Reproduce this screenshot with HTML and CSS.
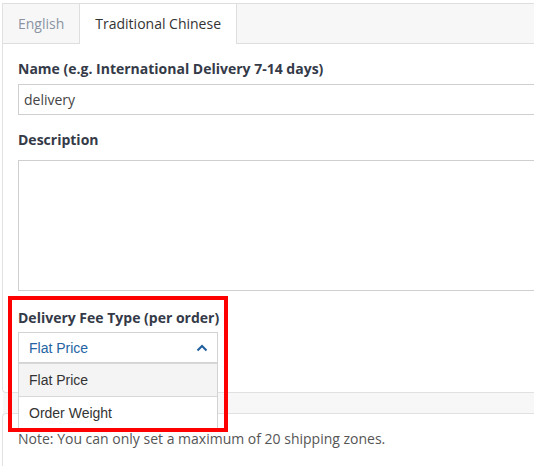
FILE: index.html
```html
<!DOCTYPE html>
<html lang="en">
<head>
    <meta charset="UTF-8">
    <meta name="viewport" content="width=device-width, initial-scale=1.0">
    <title>Shipping Zone</title>
    <link rel="stylesheet" href="styles.css">
</head>
<body>
    <div class="page">
        <div class="panel">
            <div class="tabs">
                <div class="tab">English</div>
                <div class="tab tab-active">Traditional Chinese</div>
            </div>
            <div class="panel-body">
                <div class="field">
                    <label class="field-label">Name (e.g. International Delivery 7-14 days)</label>
                    <input type="text" class="text-input" value="delivery">
                </div>
                <div class="field field-desc">
                    <label class="field-label">Description</label>
                    <textarea class="text-area"></textarea>
                </div>
                <div class="field field-fee">
                    <label class="field-label">Delivery Fee Type (per order)</label>
                    <div class="select">
                        <span class="select-value">Flat Price</span>
                        <svg class="chevron" width="12" height="8" viewBox="0 0 12 8">
                            <path d="M1.5 6.5 L6 2 L10.5 6.5" fill="none" stroke="#1f5f9e" stroke-width="2"/>
                        </svg>
                    </div>
                    <ul class="options">
                        <li class="option option-hover">Flat Price</li>
                        <li class="option">Order Weight</li>
                    </ul>
                    <div class="highlight"></div>
                </div>
            </div>
        </div>
        <div class="divider"></div>
        <div class="panel panel-note">
            <p class="note">Note: You can only set a maximum of 20 shipping zones.</p>
        </div>
    </div>
</body>
</html>
```

FILE: styles.css
```css
html, body {
    margin: 0;
    padding: 0;
    background-color: #ffffff;
    overflow: hidden;
}
body {
    font-family: "Open Sans", "Liberation Sans", sans-serif;
    font-size: 14px;
    color: #333;
}
.page {
    padding: 3px 0 0 2px;
}
.panel {
    border-left: 1px solid #e1e1e1;
    border-bottom: 1px solid #e1e1e1;
    border-radius: 0 0 0 4px;
    background-color: #ffffff;
}
.tabs {
    display: flex;
    height: 39px;
    background-color: #f7f7f7;
    border-top: 1px solid #dedede;
    border-bottom: 1px solid #dedede;
}
.tab {
    padding: 0 15px;
    line-height: 39px;
    color: #8a93a3;
    border-right: 1px solid #dedede;
}
.tab-active {
    padding: 0 15px;
    color: #333;
    background-color: #ffffff;
    height: 40px;
}
.panel-body {
    padding: 15px 0 29px 15px;
}
.field {
    margin-bottom: 15px;
}
.field-label {
    display: block;
    font-weight: bold;
    line-height: 20px;
    color: #343a48;
    margin-bottom: 5px;
}
.text-input {
    display: block;
    box-sizing: border-box;
    width: 100%;
    height: 31px;
    margin: 0;
    padding: 0 5px;
    border: 1px solid #cfcfcf;
    border-right: none;
    font-family: "Open Sans", sans-serif;
    font-size: 14px;
    color: #444;
    outline: none;
}
.field-desc {
    margin-bottom: 17px;
}
.field-desc .field-label {
    margin-bottom: 10px;
}
.text-area {
    display: block;
    box-sizing: border-box;
    width: 100%;
    height: 131px;
    margin: 0;
    border: 1px solid #cfcfcf;
    border-right: none;
    resize: none;
}
.field-fee {
    position: relative;
    width: 200px;
    margin-bottom: 0;
}
.field-fee .field-label {
    margin-bottom: 4px;
    white-space: nowrap;
}
.select {
    display: flex;
    align-items: center;
    justify-content: space-between;
    box-sizing: border-box;
    height: 31px;
    padding: 0 9px 0 10px;
    border: 1px solid #d3d3d3;
    font-family: "Liberation Sans", Arial, sans-serif;
    font-size: 14px;
    color: #2563a3;
}
.options {
    position: absolute;
    top: 55px;
    left: 0;
    right: 0;
    margin: 0;
    padding: 0;
    list-style: none;
    background-color: #ffffff;
    border: 1px solid #d3d3d3;
    border-top: none;
    z-index: 2;
}
.option {
    height: 32px;
    line-height: 32px;
    padding-left: 10px;
    border-top: 1px solid #d8d8d8;
    font-family: "Liberation Sans", Arial, sans-serif;
    font-size: 14px;
    color: #333;
}
.option-hover {
    background-color: #f4f4f4;
}
.highlight {
    position: absolute;
    left: -10px;
    top: -12px;
    width: 212px;
    height: 128px;
    border: 4px solid #ff0000;
    z-index: 3;
}
.divider {
    height: 20px;
    margin-left: 1px;
    background-color: #f7f7f7;
}
.panel-note {
    border-top: 1px solid #e1e1e1;
    border-bottom: none;
    border-radius: 4px 0 0 0;
    height: 60px;
}
.note {
    margin: 0;
    padding: 15px 0 0 15px;
    line-height: 20px;
    color: #555;
}
```
